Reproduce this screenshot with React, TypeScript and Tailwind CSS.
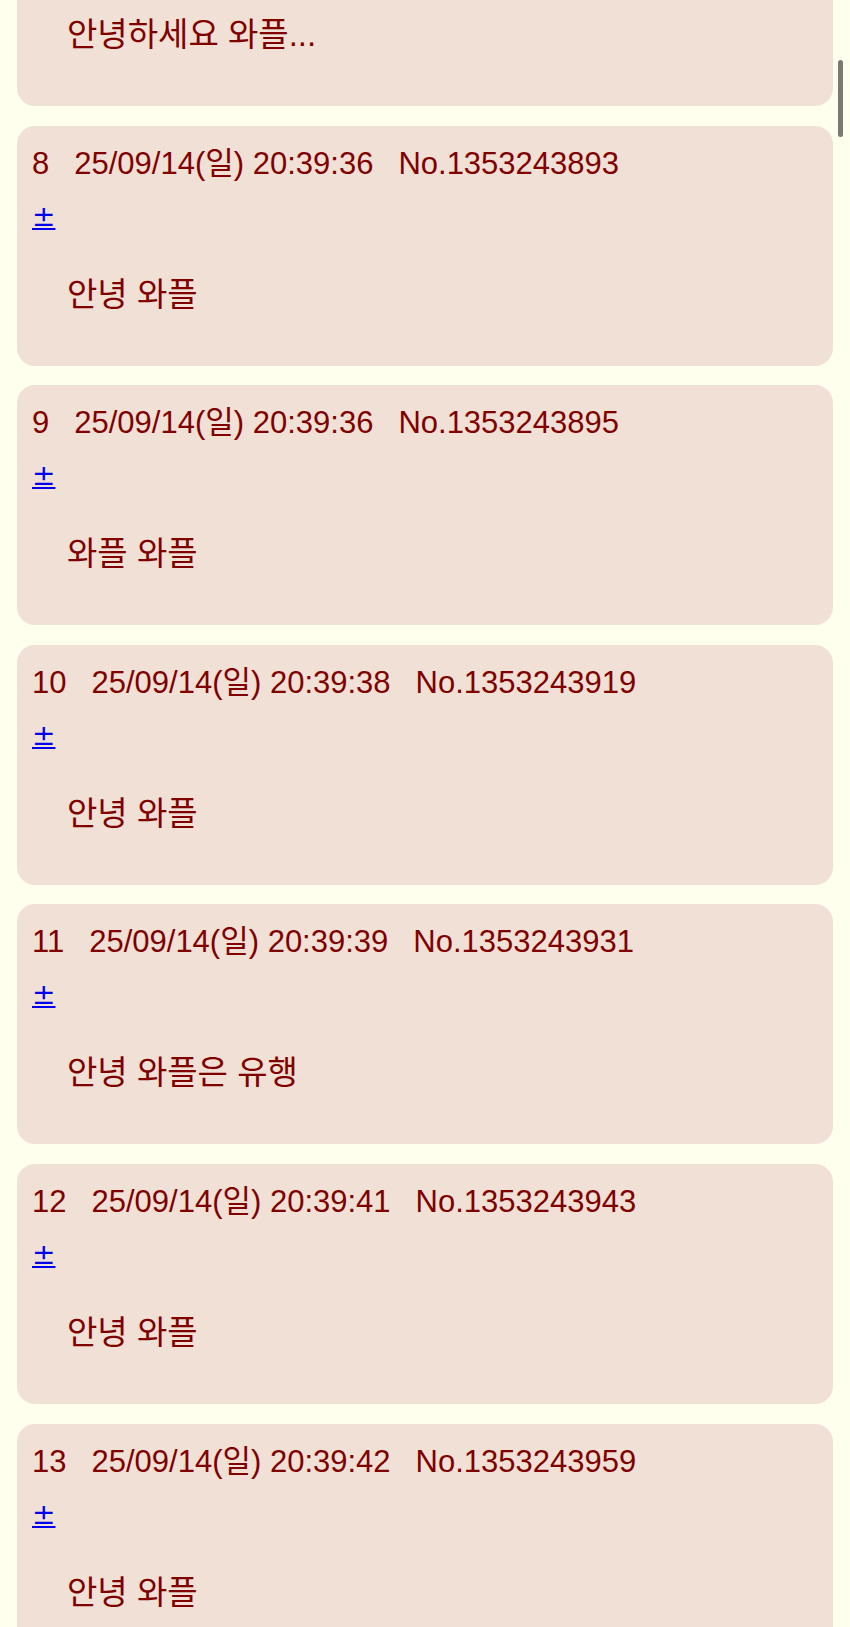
const POSTS = [
  { n: 7, date: '25/09/14(일) 20:39:35', no: '1353243881', body: '안녕하세요 와플...' },
  { n: 8, date: '25/09/14(일) 20:39:36', no: '1353243893', body: '안녕 와플' },
  { n: 9, date: '25/09/14(일) 20:39:36', no: '1353243895', body: '와플 와플' },
  { n: 10, date: '25/09/14(일) 20:39:38', no: '1353243919', body: '안녕 와플' },
  { n: 11, date: '25/09/14(일) 20:39:39', no: '1353243931', body: '안녕 와플은 유행' },
  { n: 12, date: '25/09/14(일) 20:39:41', no: '1353243943', body: '안녕 와플' },
  { n: 13, date: '25/09/14(일) 20:39:42', no: '1353243959', body: '안녕 와플' },
];

export default function App() {
  return (
    <div
      className="relative h-[1627px] overflow-hidden bg-[#ffffee] text-[31px] leading-[36px] text-[#800000]"
      style={{ fontFamily: '"Liberation Sans", Arial, "Noto Sans CJK KR", sans-serif' }}
    >
      {/* 목록 — 첫 카드는 위로 잘려 있음 */}
      <div className="-mt-[134px] flex flex-col gap-[19.6px] px-[17px]">
        {POSTS.map((p) => (
          <div key={p.n} className="flex h-[240px] flex-col rounded-[18px] bg-[#f0e0d6] px-[15px] pt-[20px]">
            <div className="whitespace-nowrap">
              <span>{p.n}</span>
              <span className="ml-[25px]">{p.date}</span>
              <span className="ml-[25px]">No.{p.no}</span>
            </div>
            <div className="mt-[16px]">
              <a
                href="#"
                className="text-[28px] text-[#0000ee] underline"
                style={{ fontFamily: '"DejaVu Sans", sans-serif' }}
              >
                ±
              </a>
            </div>
            <div className="mt-[42px] pl-[35px] text-[33px]">{p.body}</div>
          </div>
        ))}
      </div>

      {/* 모바일 스크롤바 */}
      <div className="absolute right-[7px] top-[60px] h-[77px] w-[5px] rounded-full bg-[#7a7a72]" />
    </div>
  );
}
